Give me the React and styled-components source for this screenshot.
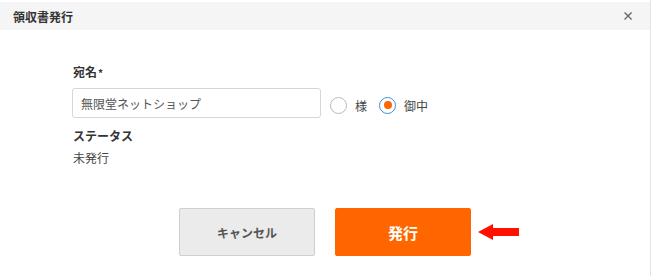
import React from "react";
import styled, { createGlobalStyle } from "styled-components";

const GlobalStyle = createGlobalStyle`
  body {
    margin: 0;
    background: #fff;
    font-family: "Noto Sans CJK JP", "Noto Sans", sans-serif;
    color: #333;
  }
`;

const Modal = styled.div`
  width: 651px;
  height: 276px;
  border-right: 1px solid #e4e4e4;
  padding-top: 2px;
  box-sizing: border-box;
`;

const Header = styled.div`
  height: 28px;
  background: #f5f5f5;
  display: flex;
  align-items: center;
  justify-content: space-between;
  padding: 0 16px 0 13px;
`;

const Title = styled.h1`
  margin: 0;
  font-size: 12px;
  font-weight: bold;
  color: #333;
`;

const Close = styled.span`
  font-size: 12px;
  font-weight: bold;
  color: #666;
  line-height: 1;
`;

const Body = styled.div`
  padding: 33px 0 0 72px;
`;

const Label = styled.div`
  font-size: 12px;
  font-weight: bold;
  color: #333;
  line-height: 18px;
  padding-left: 1px;
  margin-top: ${(p) => p.$top || 0}px;
  margin-bottom: ${(p) => p.$gap || 0}px;
`;

const Star = styled.span`
  font-size: 10px;
  margin-left: 1px;
`;

const Row = styled.div`
  display: flex;
  align-items: center;
`;

const Input = styled.div`
  width: 249px;
  height: 30px;
  box-sizing: border-box;
  border: 1px solid #d6d6d6;
  border-radius: 3px;
  display: flex;
  align-items: center;
  padding-left: 8px;
  font-size: 12px;
  color: #555;
`;

const RadioGroup = styled.div`
  display: flex;
  align-items: center;
  margin-left: 9px;
  margin-top: 4px;
  gap: 8px;
`;

const RadioItem = styled.label`
  display: flex;
  align-items: center;
  gap: 8px;
  font-size: 12px;
  color: #444;
  margin-right: 4px;
`;

const RadioCircle = styled.span`
  width: 17px;
  height: 17px;
  box-sizing: border-box;
  border-radius: 50%;
  border: 1px solid ${(p) => (p.$checked ? "#3b8fe0" : "#b9b9b9")};
  display: flex;
  align-items: center;
  justify-content: center;
  background: #fff;

  &::after {
    content: "";
    display: ${(p) => (p.$checked ? "block" : "none")};
    width: 8px;
    height: 8px;
    border-radius: 50%;
    background: #ff6600;
  }
`;

const Value = styled.div`
  font-size: 12px;
  color: #444;
  padding-left: 1px;
  line-height: 18px;
`;

const Actions = styled.div`
  display: flex;
  justify-content: center;
  gap: 20px;
  margin-top: 41px;
  position: relative;
`;

const Button = styled.button`
  width: 136px;
  height: 48px;
  box-sizing: border-box;
  border-radius: 2px;
  font-family: inherit;
  font-weight: bold;
  font-size: ${(p) => (p.$primary ? "15px" : "12px")};
  color: ${(p) => (p.$primary ? "#fff" : "#555")};
  background: ${(p) => (p.$primary ? "#ff6600" : "#ebebeb")};
  border: 1px solid ${(p) => (p.$primary ? "#ff6600" : "#cfcfcf")};
`;

const Arrow = styled.svg`
  position: absolute;
  left: 478px;
  top: 15px;
`;

export default function App() {
  return (
    <>
      <GlobalStyle />
      <Modal>
        <Header>
          <Title>領収書発行</Title>
          <Close>×</Close>
        </Header>
        <Body>
          <Label $gap={6}>
            宛名<Star>*</Star>
          </Label>
          <Row>
            <Input>無限堂ネットショップ</Input>
            <RadioGroup>
              <RadioItem>
                <RadioCircle />様
              </RadioItem>
              <RadioItem>
                <RadioCircle $checked />御中
              </RadioItem>
            </RadioGroup>
          </Row>
          <Label $top={9} $gap={4}>
            ステータス
          </Label>
          <Value>未発行</Value>
        </Body>
        <Actions>
          <Button>キャンセル</Button>
          <Button $primary>発行</Button>
          <Arrow width="42" height="18" viewBox="0 0 42 18">
            <path d="M0 9 L15 1 L15 5 L41 5 L41 13 L15 13 L15 17 Z" fill="#ff1100" />
          </Arrow>
        </Actions>
      </Modal>
    </>
  );
}
